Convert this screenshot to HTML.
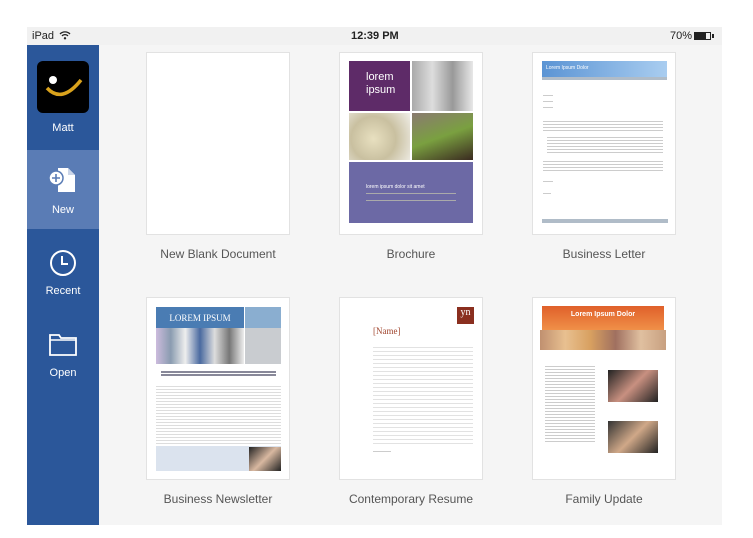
<!DOCTYPE html>
<html><head><meta charset="utf-8"><style>
*{margin:0;padding:0;box-sizing:border-box}
body{width:753px;height:538px;background:#fff;position:relative;overflow:hidden;font-family:"Liberation Sans",sans-serif}
.abs{position:absolute}
#status{left:27px;top:27px;width:695px;height:18px;background:#f1f1f1;font-size:11px;color:#222}
#side{left:27px;top:45px;width:72px;height:480px;background:#2b579a}
#main{left:99px;top:45px;width:623px;height:480px;background:#f5f5f5}
.card{position:absolute;width:144px;height:183px;background:#fff;border:1px solid #e2e2e2;overflow:hidden}
.lbl{position:absolute;width:200px;text-align:center;font-size:12px;color:#555}
.sl{position:absolute;width:72px;left:0;text-align:center;color:#fff;font-size:11px}
.ln{position:absolute;height:1px;background:#ccc}
</style></head><body>
<div id="status" class="abs">
 <span class="abs" style="left:5px;top:3px">iPad</span>
 <svg class="abs" style="left:32px;top:3px" width="12" height="10" viewBox="0 0 12 10"><path d="M1 4a7 7 0 0 1 10 0M3 6a4 4 0 0 1 6 0" stroke="#222" stroke-width="1.3" fill="none"/><circle cx="6" cy="8.3" r="1.2" fill="#222"/></svg>
 <span class="abs" style="left:324px;top:3px;font-weight:bold">12:39 PM</span>
 <span class="abs" style="left:643px;top:3px">70%</span>
 <div class="abs" style="left:667px;top:5px;width:17px;height:8px;border:1px solid #222"><div style="width:11px;height:6px;background:#222"></div></div>
 <div class="abs" style="left:685px;top:7px;width:2px;height:4px;background:#222"></div>
</div>
<div id="side" class="abs">
 <div class="abs" style="left:10px;top:16px;width:52px;height:52px;background:#000;border-radius:6px;overflow:hidden">
  <svg width="52" height="52"><circle cx="16" cy="19" r="4" fill="#fff"/><path d="M10 27q15 16 34 -8" stroke="#d9a21c" stroke-width="3.5" fill="none"/></svg>
 </div>
 <div class="sl" style="top:77px">Matt</div>
 <div class="abs" style="left:0;top:105px;width:72px;height:79px;background:#5a7cb5"></div>
 <svg class="abs" style="left:19px;top:121px" width="32" height="28" viewBox="0 0 32 28"><path d="M12 2h10l7 7v17H12z" fill="#fff"/><path d="M22 2v7h7" fill="#ccd6e8"/><circle cx="10" cy="12" r="7" fill="#fff" stroke="#5a7cb5" stroke-width="1.5"/><path d="M10 8v8M6 12h8" stroke="#5a7cb5" stroke-width="1.6"/></svg>
 <div class="sl" style="top:159px">New</div>
 <svg class="abs" style="left:22px;top:204px" width="28" height="28"><circle cx="14" cy="14" r="12" stroke="#fff" stroke-width="2" fill="none"/><path d="M13 7v8h6" stroke="#fff" stroke-width="2" fill="none"/></svg>
 <div class="sl" style="top:240px">Recent</div>
 <svg class="abs" style="left:21px;top:286px" width="30" height="26"><path d="M2 4h9l2 3h15v17H2z" stroke="#fff" stroke-width="1.8" fill="none"/><path d="M2 9h26" stroke="#fff" stroke-width="1.5"/></svg>
 <div class="sl" style="top:322px">Open</div>
</div>
<div id="main" class="abs"></div>

<!-- row1 -->
<div class="card" style="left:146px;top:52px"></div>
<div class="card" style="left:339px;top:52px">
 <div class="abs" style="left:9px;top:8px;width:61px;height:50px;background:#5e2b68;color:#fff;font-size:11px;line-height:13px;padding:10px 0 0 17px">lorem<br>ipsum</div>
 <div class="abs" style="left:72px;top:8px;width:61px;height:50px;background:linear-gradient(90deg,#aaa,#ddd,#999,#e8e8e8)"></div>
 <div class="abs" style="left:9px;top:60px;width:61px;height:47px;background:radial-gradient(circle at 40% 55%,#e8e0c0,#c9c0a0 50%,#f0eee8)"></div>
 <div class="abs" style="left:72px;top:60px;width:61px;height:47px;background:linear-gradient(160deg,#8a7a70,#7aa040 50%,#3a2a20)"></div>
 <div class="abs" style="left:9px;top:109px;width:124px;height:61px;background:#6c69a5;color:#fff;font-size:5px;padding:22px 0 0 17px">lorem ipsum dolor sit amet<div style="margin-top:3px;height:8px;width:90px;border-top:1px solid #aaa;border-bottom:1px solid #aaa"></div></div>
</div>
<div class="card" style="left:532px;top:52px">
 <div class="abs" style="left:9px;top:8px;width:125px;height:19px;background:linear-gradient(90deg,#5b94d4,#a9cdf0);border-bottom:3px solid #b0bcc8;color:#fff;font-size:5px;padding:4px">Lorem Ipsum Dolor</div>
 <div class="ln" style="left:10px;top:42px;width:10px"></div><div class="ln" style="left:10px;top:48px;width:10px"></div><div class="ln" style="left:10px;top:54px;width:10px"></div>
 <div class="ln" style="left:10px;top:66px;width:120px;height:12px;background:repeating-linear-gradient(#fff 0 2px,#ccc 2px 3px)"></div>
 <div class="ln" style="left:14px;top:82px;width:116px;height:20px;background:repeating-linear-gradient(#fff 0 2px,#ccc 2px 3px)"></div>
 <div class="ln" style="left:10px;top:106px;width:120px;height:12px;background:repeating-linear-gradient(#fff 0 2px,#ccc 2px 3px)"></div>
 <div class="ln" style="left:10px;top:128px;width:10px"></div><div class="ln" style="left:10px;top:140px;width:8px"></div>
 <div class="abs" style="left:9px;top:166px;width:126px;height:4px;background:#b0bcc8"></div>
</div>
<div class="lbl" style="left:118px;top:247px">New Blank Document</div>
<div class="lbl" style="left:311px;top:247px">Brochure</div>
<div class="lbl" style="left:504px;top:247px">Business Letter</div>

<!-- row2 -->
<div class="card" style="left:146px;top:297px">
 <div class="abs" style="left:9px;top:9px;width:88px;height:21px;background:#4a7cb3;color:#fff;font-family:'Liberation Serif',serif;font-size:9px;text-align:center;padding-top:6px">LOREM IPSUM</div>
 <div class="abs" style="left:98px;top:9px;width:36px;height:21px;background:#8aaed0"></div>
 <div class="abs" style="left:9px;top:30px;width:88px;height:36px;background:linear-gradient(90deg,#cbd,#8a9cb0,#eee,#4a6aa0,#ddd,#777,#eee)"></div>
 <div class="abs" style="left:98px;top:30px;width:36px;height:36px;background:#c9ccd0"></div>
 <div class="ln" style="left:14px;top:72px;width:115px;height:6px;background:repeating-linear-gradient(#fff 0 1px,#889 1px 3px)"></div>
 <div class="ln" style="left:9px;top:86px;width:125px;height:60px;background:repeating-linear-gradient(90deg,#fff 0 0,transparent 0),repeating-linear-gradient(#fff 0 2px,#ddd 2px 3px)"></div>
 <div class="abs" style="left:9px;top:148px;width:125px;height:25px;background:#dbe3ee"></div>
 <div class="abs" style="left:102px;top:149px;width:32px;height:24px;background:linear-gradient(135deg,#222,#d8b8a0,#222)"></div>
</div>
<div class="card" style="left:339px;top:297px">
 <div class="abs" style="left:117px;top:9px;width:17px;height:17px;background:#8a2f1f;color:#fff;font-size:10px;text-align:center;font-family:'Liberation Serif',serif">yn</div>
 <div class="abs" style="left:33px;top:28px;color:#a0452e;font-family:'Liberation Serif',serif;font-size:9px">[Name]</div>
 <div class="ln" style="left:33px;top:46px;width:100px;height:100px;background:repeating-linear-gradient(#fff 0 3px,#e2e2e2 3px 4px)"></div>
 <div class="ln" style="left:33px;top:153px;width:18px"></div>
</div>
<div class="card" style="left:532px;top:297px">
 <div class="abs" style="left:9px;top:8px;width:122px;height:24px;background:linear-gradient(#e0602a,#f09048);color:#fff;font-size:7px;font-weight:bold;text-align:center;padding-top:5px">Lorem Ipsum Dolor</div>
 <div class="abs" style="left:7px;top:32px;width:126px;height:20px;background:linear-gradient(90deg,#c09070,#e8c090,#d8a060,#a07060,#e0c0a0,#c8a080)"></div>
 <div class="ln" style="left:12px;top:66px;width:50px;height:80px;background:repeating-linear-gradient(#fff 0 2px,#ccc 2px 3px)"></div>
 <div class="abs" style="left:75px;top:72px;width:50px;height:32px;background:linear-gradient(135deg,#222,#c89080,#222)"></div>
 <div class="abs" style="left:75px;top:123px;width:50px;height:32px;background:linear-gradient(135deg,#333,#d0a888,#222)"></div>
</div>
<div class="lbl" style="left:118px;top:492px">Business Newsletter</div>
<div class="lbl" style="left:311px;top:492px">Contemporary Resume</div>
<div class="lbl" style="left:504px;top:492px">Family Update</div>
</body></html>
